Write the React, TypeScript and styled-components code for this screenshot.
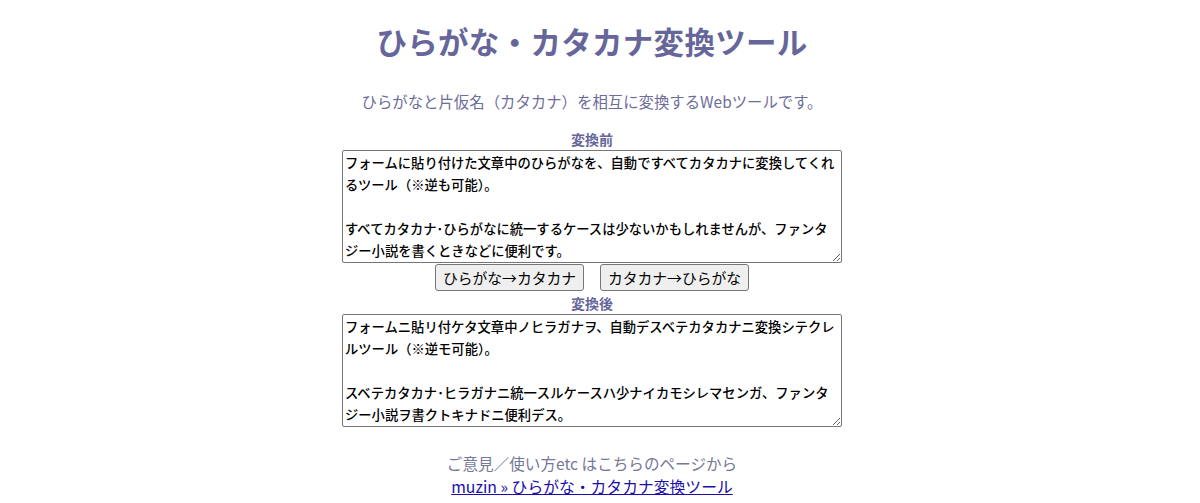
import React, { useState } from "react";
import styled, { createGlobalStyle } from "styled-components";

const GlobalStyle = createGlobalStyle`
  html, body {
    margin: 0;
    padding: 0;
    background: #ffffff;
  }
  body {
    font-family: "Noto Sans CJK JP", "Noto Sans", sans-serif;
  }
`;

const Page = styled.main`
  display: flex;
  flex-direction: column;
  align-items: center;
  padding: 18px 16px 0 0;
`;

const Title = styled.h1`
  margin: 0;
  font-size: 30.5px;
  line-height: 46px;
  font-weight: 700;
  color: #66669a;
  letter-spacing: 0.3px;
`;

const Lead = styled.p`
  margin: 26px 0 0;
  font-size: 15.4px;
  line-height: 22px;
  color: #6d6d9c;
`;

const Label = styled.label<{ $gap: number }>`
  display: block;
  margin-top: ${(p) => p.$gap}px;
  font-size: 14px;
  line-height: 20px;
  font-weight: 700;
  color: #66669a;
`;

const TextBox = styled.textarea`
  box-sizing: border-box;
  width: 500px;
  height: 113px;
  margin: 1px 0 0;
  padding: 1px 2px;
  border: 1px solid #767676;
  border-radius: 2px;
  font-family: "Noto Sans CJK JP", sans-serif;
  font-size: 13.3px;
  font-weight: 500;
  line-height: 22px;
  color: #000000;
  background: #ffffff;
  resize: vertical;
  overflow: hidden;
`;

const ButtonRow = styled.div`
  display: flex;
  gap: 16px;
  margin-top: 1px;
`;

const ConvertButton = styled.button`
  box-sizing: border-box;
  width: 149px;
  height: 27px;
  padding: 0 6px;
  border: 1px solid #767676;
  border-radius: 3px;
  background: #efefef;
  font-family: "Noto Sans CJK JP", sans-serif;
  font-size: 14.8px;
  color: #000000;
  cursor: pointer;
`;

const Note = styled.p`
  margin: 25px 0 0;
  font-size: 15.6px;
  line-height: 22px;
  color: #77779a;
`;

const Credit = styled.a`
  margin-top: 2px;
  font-size: 15.8px;
  line-height: 22px;
  color: #1a0dab;
  text-decoration: underline;
`;

const toKatakana = (s: string) =>
  s.replace(/[\u3041-\u3096]/g, (c) => String.fromCharCode(c.charCodeAt(0) + 0x60));
const toHiragana = (s: string) =>
  s.replace(/[\u30a1-\u30f6]/g, (c) => String.fromCharCode(c.charCodeAt(0) - 0x60));

const SOURCE =
  "フォームに貼り付けた文章中のひらがなを、自動ですべてカタカナに変換してくれるツール（※逆も可能）。\n\nすべてカタカナ･ひらがなに統一するケースは少ないかもしれませんが、ファンタジー小説を書くときなどに便利です。";

export default function App() {
  const [input, setInput] = useState(SOURCE);
  const [output, setOutput] = useState(toKatakana(SOURCE));

  return (
    <>
      <GlobalStyle />
      <Page>
        <Title>ひらがな・カタカナ変換ツール</Title>
        <Lead>ひらがなと片仮名（カタカナ）を相互に変換するWebツールです。</Lead>
        <Label $gap={17} htmlFor="before">変換前</Label>
        <TextBox id="before" value={input} onChange={(e) => setInput(e.target.value)} />
        <ButtonRow>
          <ConvertButton onClick={() => setOutput(toKatakana(input))}>ひらがな→カタカナ</ConvertButton>
          <ConvertButton onClick={() => setOutput(toHiragana(input))}>カタカナ→ひらがな</ConvertButton>
        </ButtonRow>
        <Label $gap={2} htmlFor="after">変換後</Label>
        <TextBox id="after" value={output} readOnly />
        <Note>ご意見／使い方etc はこちらのページから</Note>
        <Credit href="#">muzin » ひらがな・カタカナ変換ツール</Credit>
      </Page>
    </>
  );
}
